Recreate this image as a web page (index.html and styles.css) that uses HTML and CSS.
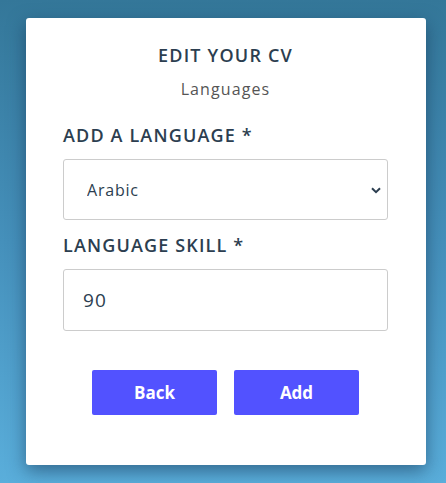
FILE: index.html
```html
<!DOCTYPE html>
<html lang="en">
<head>
<meta charset="utf-8">
<title>Edit your CV</title>
<link rel="stylesheet" href="styles.css">
</head>
<body>
<main class="page">
  <section class="card">
    <h1 class="title">EDIT YOUR CV</h1>
    <p class="subtitle">Languages</p>
    <form class="form">
      <label class="label" for="lang">ADD A LANGUAGE *</label>
      <div class="select-wrap">
        <select id="lang" class="field select">
          <option>Arabic</option>
        </select>
        <svg class="chevron" width="10" height="7" viewBox="0 0 10 7"><path d="M1 1.2 L5 5.2 L9 1.2" fill="none" stroke="#2c3e50" stroke-width="2"/></svg>
      </div>
      <label class="label label-skill" for="skill">LANGUAGE SKILL *</label>
      <input id="skill" class="field input" type="text" value="90">
      <div class="actions">
        <button type="button" class="btn">Back</button>
        <button type="button" class="btn">Add</button>
      </div>
    </form>
  </section>
</main>
</body>
</html>
```
FILE: styles.css
```css
* { box-sizing: border-box; }
html, body { margin: 0; padding: 0; }
body {
  width: 446px;
  height: 483px;
  background: linear-gradient(180deg, #347799 0%, #4590bb 50%, #5aaedb 100%);
  font-family: "Open Sans", "Liberation Sans", sans-serif;
  overflow: hidden;
}
.page {
  padding: 18px 20px 0 26px;
}
.card {
  width: 400px;
  height: 447px;
  background: #fff;
  border-radius: 3px;
  box-shadow: 0 6px 18px rgba(20, 50, 80, 0.55);
  padding: 24px 38px 0 37px;
  display: flex;
  flex-direction: column;
  align-items: stretch;
}
.title {
  margin: 0;
  text-align: center;
  font-size: 18px;
  font-weight: 600;
  color: #2c3e50;
  line-height: 26px;
  letter-spacing: 1.2px;
}
.subtitle {
  margin: 11px 0 0;
  text-align: center;
  font-size: 16px;
  color: #555;
  line-height: 20px;
  letter-spacing: 1.1px;
}
.form {
  display: flex;
  flex-direction: column;
  margin-top: 24px;
}
.label {
  font-size: 18px;
  font-weight: 600;
  color: #2c3e50;
  line-height: 24px;
  letter-spacing: 1.15px;
}
.label-skill { margin-top: 13px; }
.select-wrap {
  position: relative;
  margin-top: 12px;
}
.field {
  width: 325px;
  border: 1px solid #ccc;
  border-radius: 3px;
  background: #fff;
  font-family: inherit;
  color: #2c3e50;
  outline: none;
}
.select {
  display: block;
  height: 61px;
  padding: 0 0 0 23px;
  font-size: 16px;
  letter-spacing: 0.8px;
  -webkit-appearance: none;
  appearance: none;
}
.chevron {
  position: absolute;
  right: 7px;
  top: 28px;
}
.input {
  margin-top: 12px;
  height: 62px;
  padding: 0 0 0 19px;
  font-size: 19px;
  letter-spacing: 1.2px;
}
.actions {
  display: flex;
  justify-content: center;
  gap: 17px;
  margin-top: 39px;
}
.btn {
  width: 125px;
  height: 45px;
  border: none;
  border-radius: 2px;
  background: #5252ff;
  color: #fff;
  font-family: inherit;
  font-size: 17px;
  font-weight: 700;
  cursor: pointer;
}
```
